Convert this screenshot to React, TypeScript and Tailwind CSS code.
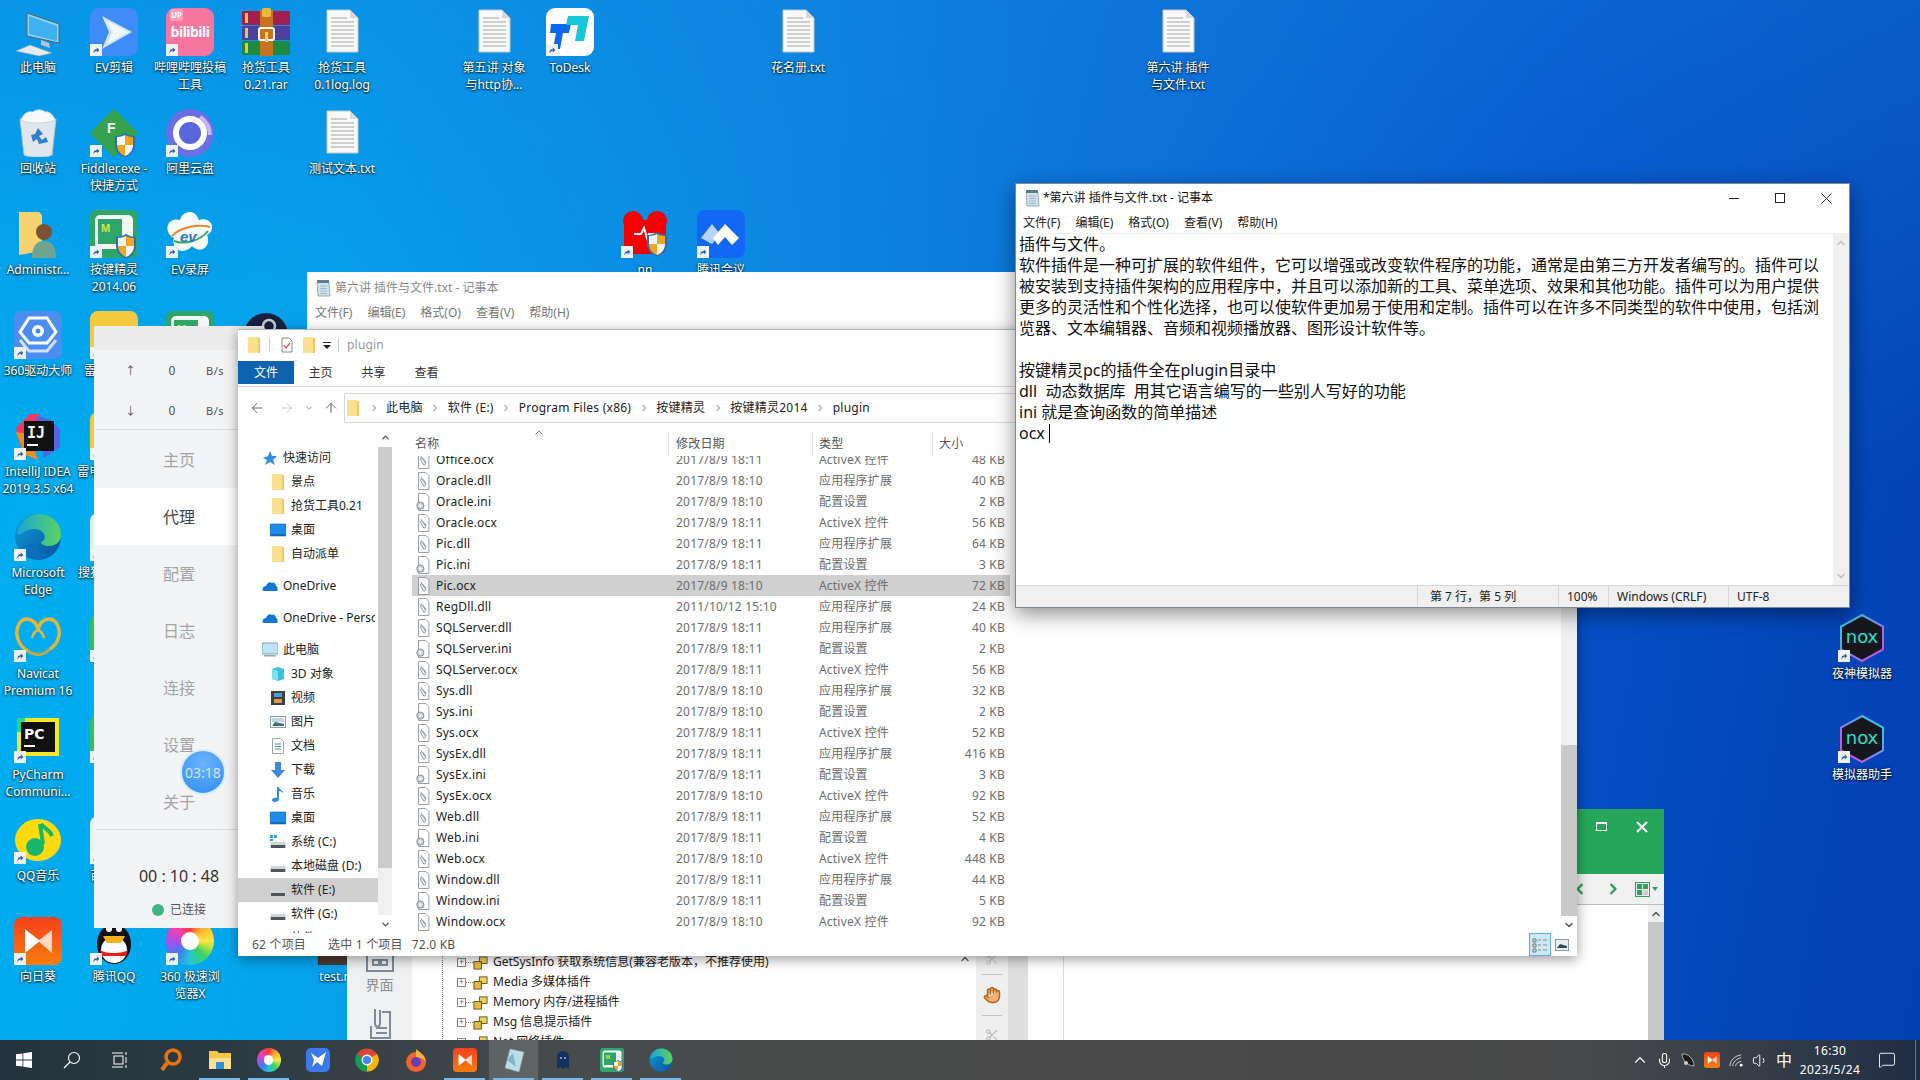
import React from 'react';
import { ChevronUp, ChevronDown, ArrowLeft, ArrowRight, ArrowUp, Hand, Scissors, Mic, Volume1, MessageSquare } from 'lucide-react';

// ---------- desktop icons ----------
const Svg = ({ children }: { children: React.ReactNode }) => (
  <svg viewBox="0 0 48 48" className="w-full h-full">{children}</svg>
);

const Shield = ({ x, y }: { x: number; y: number }) => (
  <g transform={`translate(${x} ${y})`}>
    <path d="M10 0C7 2 4 3 0 3v9c0 6 4 10 10 13 6-3 10-7 10-13V3c-4 0-7-1-10-3z" fill="#2a6fb5" />
    <path d="M10 2v10H2V4c3 0 6-1 8-2z" fill="#f5f5f5" />
    <path d="M10 2c2 1 5 2 8 2v8h-8z" fill="#f0a51e" />
    <path d="M2 12h8v11c-5-2-8-6-8-11z" fill="#f0a51e" />
    <path d="M10 12h8c0 5-3 9-8 11z" fill="#f5f5f5" />
  </g>
);

const MonitorIcon = () => (
  <Svg>
    <path d="M13 5l32 11v19L13 28z" fill="#8ed2f5" stroke="#56636e" strokeWidth="1" />
    <path d="M15 8l28 10v15L15 26z" fill="#3fb1ee" />
    <path d="M27 32l8 3 1 5-9-3z" fill="#b9c4cc" />
    <path d="M2 43l14-6 22 8-13 3z" fill="#e6ebee" stroke="#98a3ab" strokeWidth="0.6" />
  </Svg>
);

const EvCut = () => (
  <Svg>
    <rect x="0" y="0" width="48" height="48" rx="9" fill="#3f8cf8" />
    <path d="M12 8l30 16-30 17 7-17z" fill="#cfe4ff" />
    <path d="M17 13l21 11-21 12 6-12z" fill="#fff" opacity="0.75" />
  </Svg>
);

const Bili = () => (
  <div className="relative w-full h-full rounded-[9px] bg-[#f7769f] overflow-hidden text-white">
    <div className="absolute left-[4px] top-[1px] text-[8px] leading-[12px] font-bold bg-[#ff9db9] px-[1px] rounded-[2px]">UP</div>
    <div className="absolute left-0 right-0 top-[15px] text-center text-[14px] leading-[18px] font-bold tracking-[-0.5px]">bilibili</div>
  </div>
);

const Rar = () => (
  <Svg>
    <rect x="0" y="3" width="48" height="14" rx="1" fill="#a41f4f" />
    <rect x="0" y="18" width="48" height="14" rx="1" fill="#4d3f9f" />
    <rect x="0" y="33" width="48" height="14" rx="1" fill="#1d8a3f" />
    <rect x="3" y="5" width="3" height="10" fill="#e9c83c" />
    <rect x="3" y="20" width="3" height="10" fill="#e9c83c" />
    <rect x="3" y="35" width="3" height="10" fill="#e9c83c" />
    <rect x="18" y="2" width="13" height="46" fill="#c9711d" />
    <rect x="20" y="0" width="9" height="9" rx="2" fill="#edb93c" />
    <rect x="17" y="20" width="15" height="12" rx="2" fill="none" stroke="#fff" strokeWidth="2" />
    <rect x="23" y="24" width="3" height="10" fill="#f3d36b" />
  </Svg>
);

const TxtFile = () => (
  <Svg>
    <path d="M9 2h23l8 8v34H9z" fill="#f9f9f9" stroke="#c7c7c7" strokeWidth="1" />
    <path d="M32 2v8h8z" fill="#d8d8d8" />
    {[10, 14, 18, 22, 26, 30, 34, 38].map((y) => (
      <line key={y} x1="13" x2={y === 10 ? 29 : 36} y1={y} y2={y} stroke="#a5a5a5" strokeWidth="1" />
    ))}
  </Svg>
);

const ToDeskIcon = () => (
  <Svg>
    <rect x="0" y="0" width="48" height="48" rx="9" fill="#fff" />
    <path d="M5 16h20l-2 9h-6l-3 16H7l3-16H4z" fill="#0b6bf0" />
    <path d="M22 8h21l-5 25h-9l3-16h-12z" fill="#19c7d8" />
  </Svg>
);

const Recycle = () => (
  <Svg>
    <path d="M6 10l4 36c6 3 22 3 28 0l4-36z" fill="#dfe7ec" stroke="#b6c2ca" strokeWidth="1" />
    <path d="M7 11c3-8 8-9 12-8 3-3 9-3 12 0 5-1 8 3 10 8-9 4-26 4-34 0z" fill="#f7f9fa" stroke="#c9d1d6" strokeWidth="0.8" />
    <path d="M24 19l5 6-4 2 3 4 4-3 2 5-9 2-2-5-4 3-2-7 4-1z" fill="#2e7fd0" />
  </Svg>
);

const Fiddler = () => (
  <Svg>
    <path d="M24 0l24 24-24 24L0 24z" fill="#36a24b" />
    <text x="17" y="24" fontSize="14" fontWeight="700" fill="#fff" fontFamily="Liberation Sans">F</text>
    <Shield x={25} y={24} />
  </Svg>
);

const AliDrive = () => (
  <Svg>
    <circle cx="24" cy="24" r="24" fill="#6a6fe6" />
    <circle cx="24" cy="24" r="14" fill="#5a66dc" stroke="#fff" strokeWidth="6" />
    <path d="M34 8a22 22 0 0110 18" fill="none" stroke="#c7b8f5" strokeWidth="4" />
  </Svg>
);

const Admin = () => (
  <Svg>
    <path d="M5 2h20l3 3v36l-23 4z" fill="#f6d36f" />
    <circle cx="30" cy="22" r="8" fill="#7a5334" />
    <path d="M18 48c0-14 6-17 12-17s12 3 12 17z" fill="#6fa58e" />
  </Svg>
);

const KeyWizard = () => (
  <Svg>
    <rect x="0" y="0" width="48" height="48" rx="6" fill="#2ea66a" />
    <rect x="5" y="5" width="38" height="34" rx="5" fill="#f3f7f3" />
    <rect x="8" y="9" width="24" height="25" fill="#2ea66a" />
    <text x="11" y="22" fontSize="11" fontWeight="700" fill="#d8e24c" fontFamily="Liberation Sans">M</text>
    <Shield x={26} y={24} />
  </Svg>
);

const EvRec = () => (
  <Svg>
    <path d="M24 2c6 0 8 6 9 8 5-2 12 0 13 6 1 5-3 8-5 9 2 4 2 11-4 14-5 2-9-1-11-3-3 4-10 7-15 3-4-3-4-8-3-11-5-2-8-8-6-13 2-6 9-6 12-5 1-4 4-8 10-8z" fill="#f6fbff" />
    <path d="M6 26c8-9 26-12 38-9" fill="none" stroke="#e78a2b" strokeWidth="2" />
    <path d="M8 31c10 4 26 0 34-10" fill="none" stroke="#35a853" strokeWidth="2" />
    <text x="14" y="32" fontSize="15" fontStyle="italic" fontWeight="700" fill="#2a74c8" fontFamily="Liberation Sans">ev</text>
  </Svg>
);

const Driver360 = () => (
  <Svg>
    <rect x="0" y="0" width="48" height="48" rx="7" fill="#4c8df0" />
    <path d="M15 7h18l9 14-9 11H15L6 21z" fill="none" stroke="#fff" strokeWidth="3" />
    <path d="M6 29l9 11h18l9-11" fill="none" stroke="#cfe1fb" strokeWidth="3" />
    <circle cx="24" cy="20" r="6" fill="#fff" />
    <circle cx="24" cy="20" r="2.500" fill="#4c8df0" />
  </Svg>
);

const IdeaIcon = () => (
  <Svg>
    <path d="M2 16L16 2h10l-8 24L6 34z" fill="#f4385f" />
    <path d="M22 4l12 3 12 10v18L30 46z" fill="#5a63e0" />
    <path d="M2 20l8 22 14 6-10-26z" fill="#f28c20" />
    <rect x="10" y="9" width="30" height="30" fill="#111" />
    <text x="13" y="26" fontSize="15" fontWeight="700" fill="#fff" fontFamily="DejaVu Sans Mono">IJ</text>
    <rect x="13" y="32" width="11" height="2" fill="#fff" />
  </Svg>
);

const EdgeIcon = () => (
  <Svg>
    <defs>
      <linearGradient id="edgeA" x1="0" y1="0" x2="1" y2="1">
        <stop offset="0" stopColor="#0c9fd8" />
        <stop offset="1" stopColor="#0b4f9e" />
      </linearGradient>
      <linearGradient id="edgeB" x1="0" y1="0" x2="1" y2="0">
        <stop offset="0" stopColor="#1aa6d8" />
        <stop offset="1" stopColor="#5bd35f" />
      </linearGradient>
    </defs>
    <circle cx="24" cy="24" r="23" fill="url(#edgeA)" />
    <path d="M3 20C6 7 16 1 25 1c12 0 22 9 22 21 0 7-6 11-12 11-5 0-8-2-8-4 3-1 5-4 3-8-3-6-13-6-18-3-4 2-7 5-9 2z" fill="url(#edgeB)" />
    <path d="M20 27c-2 8 5 15 14 14-3 4-8 6-12 5-8-2-12-12-2-19z" fill="#0c6fbd" />
  </Svg>
);

const Navicat = () => (
  <Svg>
    <path d="M24 16C22 4 10 2 5 10c-5 9-1 22 9 27" fill="none" stroke="#e2b63c" strokeWidth="3.500" />
    <path d="M24 16C26 4 38 2 43 10c5 9 1 20-7 25" fill="none" stroke="#e2b63c" strokeWidth="3.500" />
    <path d="M14 37c7 5 15 5 22-2" fill="none" stroke="#c9a93e" strokeWidth="3" />
    <path d="M24 16c-3 1-5 4-6 8M24 16c3 1 5 4 6 8" fill="none" stroke="#e2b63c" strokeWidth="2.500" />
  </Svg>
);

const PyCharmIcon = () => (
  <Svg>
    <rect x="3" y="3" width="42" height="38" fill="#f6e72b" />
    <rect x="3" y="3" width="8" height="14" fill="#21d789" />
    <rect x="7" y="7" width="34" height="30" fill="#111" />
    <text x="10" y="24" fontSize="14" fontWeight="700" fill="#fff" fontFamily="DejaVu Sans">PC</text>
    <rect x="10" y="30" width="11" height="2" fill="#fff" />
  </Svg>
);

const QQMusic = () => (
  <Svg>
    <ellipse cx="24" cy="24" rx="23" ry="21" fill="#ffdb0d" />
    <path d="M26 8l3 20" stroke="#18b56c" strokeWidth="4" />
    <circle cx="21" cy="31" r="9" fill="#18b56c" />
    <path d="M27 8c4 5 9 6 11 12" fill="none" stroke="#18b56c" strokeWidth="4" />
  </Svg>
);

const Sunflower = () => (
  <Svg>
    <defs>
      <linearGradient id="sun" x1="0" y1="0" x2="0" y2="1">
        <stop offset="0" stopColor="#f2401e" />
        <stop offset="1" stopColor="#fa7d0c" />
      </linearGradient>
    </defs>
    <rect x="0" y="0" width="48" height="48" rx="8" fill="url(#sun)" />
    <path d="M11 12l15 12-15 12z" fill="#fff" />
    <path d="M38 13L24 24l14 12z" fill="#ffd9c5" />
  </Svg>
);

const Penguin = () => (
  <Svg>
    <ellipse cx="24" cy="27" rx="17" ry="20" fill="#111" />
    <ellipse cx="24" cy="33" rx="13" ry="13" fill="#fff" />
    <path d="M13 19h22l-4 7H17z" fill="#f6b11a" />
    <path d="M10 33c5 4 23 4 28 0l-2 6H12z" fill="#e3201b" />
    <circle cx="19" cy="12" r="3" fill="#fff" />
    <circle cx="29" cy="12" r="3" fill="#fff" />
  </Svg>
);

const Swirl = () => (
  <div className="w-full h-full rounded-full bg-[conic-gradient(#ff3d3d,#ffb02e,#ffe83a,#3fd35c,#27c7d6,#3f7bf0,#b04ce8,#ff3da0,#ff3d3d)] flex items-center justify-center">
    <div className="w-[38%] h-[38%] rounded-full bg-white" />
  </div>
);

const Tile = ({ color }: { color: string }) => <div className={`w-full h-full rounded-[8px] ${color}`} />;

const RedBear = () => (
  <Svg>
    <circle cx="12" cy="11" r="10" fill="#f40000" />
    <circle cx="36" cy="11" r="10" fill="#f40000" />
    <rect x="3" y="10" width="42" height="34" rx="6" fill="#f40000" />
    <path d="M13 24h7l3-6 3 10 2-4h6" fill="none" stroke="#fff" strokeWidth="2" />
    <Shield x={26} y={22} />
  </Svg>
);

const Meeting = () => (
  <Svg>
    <rect x="0" y="0" width="48" height="48" rx="8" fill="#1367f5" />
    <path d="M4 28l11-14 8 10-8 10z" fill="#b9d4ff" />
    <path d="M16 28l12-14 14 14-7 7-7-8-7 8z" fill="#fff" />
  </Svg>
);

const Nox = ({ flip }: { flip?: boolean }) => (
  <Svg>
    <defs>
      <linearGradient id="noxA" x1="0" y1="0" x2="1" y2="1">
        <stop offset="0" stopColor="#19d8e6" />
        <stop offset="1" stopColor="#e03ee0" />
      </linearGradient>
      <linearGradient id="noxB" x1="1" y1="0" x2="0" y2="1">
        <stop offset="0" stopColor="#19d8e6" />
        <stop offset="1" stopColor="#e03ee0" />
      </linearGradient>
    </defs>
    <path d="M24 1l21 11.500v23L24 47 3 35.500v-23z" fill="#15171d" stroke={flip ? 'url(#noxB)' : 'url(#noxA)'} strokeWidth="2" />
    <text x="24" y="29" textAnchor="middle" fontSize="18" fill="#27e0d2" fontFamily="DejaVu Sans">nox</text>
  </Svg>
);

const Steam = () => (
  <Svg>
    <circle cx="24" cy="24" r="22" fill="#16213f" />
    <circle cx="27" cy="15" r="6" fill="none" stroke="#c7ccd6" strokeWidth="2.500" />
  </Svg>
);

const Shortcut = () => (
  <div className="absolute left-0 bottom-0 w-[12px] h-[12px] bg-[#eef2f6] flex items-center justify-center">
    <svg viewBox="0 0 12 12" className="w-[10px] h-[10px]">
      <path d="M3 10c0-4 1-5 4-5V3l3 3-3 3V7c-2 0-3 1-4 3z" fill="#2b5f9e" />
    </svg>
  </div>
);

type DeskItem = { x: number; row: number; label: string; icon: React.ReactNode; link?: boolean };

const desk: DeskItem[] = [
  { x: 38, row: 0, label: '此电脑', icon: <MonitorIcon /> },
  { x: 38, row: 1, label: '回收站', icon: <Recycle /> },
  { x: 38, row: 2, label: 'Administr...', icon: <Admin /> },
  { x: 38, row: 3, label: '360驱动大师', icon: <Driver360 />, link: true },
  { x: 38, row: 4, label: 'IntelliJ IDEA\n2019.3.5 x64', icon: <IdeaIcon />, link: true },
  { x: 38, row: 5, label: 'Microsoft\nEdge', icon: <EdgeIcon />, link: true },
  { x: 38, row: 6, label: 'Navicat\nPremium 16', icon: <Navicat />, link: true },
  { x: 38, row: 7, label: 'PyCharm\nCommuni...', icon: <PyCharmIcon />, link: true },
  { x: 38, row: 8, label: 'QQ音乐', icon: <QQMusic />, link: true },
  { x: 38, row: 9, label: '向日葵', icon: <Sunflower />, link: true },
  { x: 114, row: 0, label: 'EV剪辑', icon: <EvCut />, link: true },
  { x: 114, row: 1, label: 'Fiddler.exe -\n快捷方式', icon: <Fiddler />, link: true },
  { x: 114, row: 2, label: '按键精灵\n2014.06', icon: <KeyWizard />, link: true },
  { x: 114, row: 3, label: '雷电模拟器', icon: <Tile color="bg-[#f5c93e]" />, link: true },
  { x: 114, row: 4, label: '雷电多开器64', icon: <Tile color="bg-[#f5c93e]" />, link: true },
  { x: 114, row: 5, label: '搜狗拼音输入', icon: <Tile color="bg-[#dfeef8]" />, link: true },
  { x: 114, row: 6, label: '', icon: <Tile color="bg-[#2fc15a]" />, link: true },
  { x: 114, row: 7, label: '', icon: <Tile color="bg-[#2fc15a]" />, link: true },
  { x: 114, row: 8, label: '百度网盘', icon: <Tile color="bg-[#e9eef2]" />, link: true },
  { x: 114, row: 9, label: '腾讯QQ', icon: <Penguin />, link: true },
  { x: 190, row: 0, label: '哔哩哔哩投稿\n工具', icon: <Bili />, link: true },
  { x: 190, row: 1, label: '阿里云盘', icon: <AliDrive />, link: true },
  { x: 190, row: 2, label: 'EV录屏', icon: <EvRec />, link: true },
  { x: 190, row: 3, label: '', icon: <KeyWizard />, link: true },
  { x: 190, row: 9, label: '360 极速浏\n览器X', icon: <Swirl />, link: true },
  { x: 266, row: 0, label: '抢货工具\n0.21.rar', icon: <Rar /> },
  { x: 266, row: 3, label: '', icon: <Steam /> },
  { x: 342, row: 0, label: '抢货工具\n0.1log.log', icon: <TxtFile /> },
  { x: 342, row: 1, label: '测试文本.txt', icon: <TxtFile /> },
  { x: 342, row: 9, label: 'test.nnx', icon: <div className="w-full h-full bg-[#4a3a30]" /> },
  { x: 494, row: 0, label: '第五讲 对象\n与http协...', icon: <TxtFile /> },
  { x: 570, row: 0, label: 'ToDesk', icon: <ToDeskIcon />, link: true },
  { x: 645, row: 2, label: 'nn', icon: <RedBear />, link: true },
  { x: 721, row: 2, label: '腾讯会议', icon: <Meeting />, link: true },
  { x: 798, row: 0, label: '花名册.txt', icon: <TxtFile /> },
  { x: 1178, row: 0, label: '第六讲 插件\n与文件.txt', icon: <TxtFile /> },
  { x: 1862, row: 6, label: '夜神模拟器', icon: <Nox />, link: true },
  { x: 1862, row: 7, label: '模拟器助手', icon: <Nox flip />, link: true },
];

const DesktopIcon = ({ item }: { item: DeskItem }) => (
  <div className="absolute w-[76px] flex flex-col items-center" style={{ left: item.x - 38, top: 8 + item.row * 101 }}>
    <div className="relative w-[48px] h-[48px]">
      {item.icon}
      {item.link && <Shortcut />}
    </div>
    <div className="pt-[3px] text-[12px] leading-[17px] text-white text-center whitespace-pre [text-shadow:0_1px_2px_rgba(0,0,0,0.9),0_0_3px_rgba(0,0,0,0.55)]">
      {item.label}
    </div>
  </div>
);

// ---------- small explorer icons ----------
const FolderSmall = () => (
  <svg viewBox="0 0 16 16" className="w-[16px] h-[16px]">
    <path d="M2 0h10l2 2v14H2z" fill="#fbe08f" />
    <path d="M12 1h2v15h-2z" fill="#f0c75e" />
  </svg>
);

const Desk = () => (
  <svg viewBox="0 0 16 16" className="w-[16px] h-[16px]">
    <rect x="0" y="2" width="16" height="12" fill="#1f8be8" stroke="#1767b2" strokeWidth="0.6" />
    <rect x="1" y="12.500" width="14" height="1" fill="#0e4f92" />
  </svg>
);

const Cloud = () => (
  <svg viewBox="0 0 16 16" className="w-[16px] h-[16px]">
    <path d="M1 13c-1-2 0-5 3-5 1-3 4-5 6-3 2-1 4 1 4 3 2 0 2 5 1 5z" fill="#1279d6" />
  </svg>
);

const Star = () => (
  <svg viewBox="0 0 16 16" className="w-[16px] h-[16px]">
    <path d="M8 1l2 5h5l-4 4 2 5-5-3-5 3 2-5-4-2 5-2z" fill="#2f8ee0" />
  </svg>
);

const Pc = () => (
  <svg viewBox="0 0 16 16" className="w-[16px] h-[16px]">
    <rect x="0" y="1" width="16" height="11" fill="#bfe3f8" stroke="#6f8ea6" strokeWidth="0.8" />
    <rect x="2" y="13" width="12" height="1.500" fill="#9aa8b2" />
  </svg>
);

const Cube = () => (
  <svg viewBox="0 0 16 16" className="w-[16px] h-[16px]">
    <path d="M2 3l6-2 6 2v10l-6 2-6-2z" fill="#3cc0dc" />
    <path d="M2 3l6 2v10l-6-2z" fill="#7fe0ee" />
  </svg>
);

const Film = () => (
  <svg viewBox="0 0 16 16" className="w-[16px] h-[16px]">
    <rect x="1" y="1" width="14" height="14" fill="#40413f" />
    <rect x="4" y="3" width="8" height="4" fill="#4d9be0" />
    <rect x="4" y="9" width="8" height="4" fill="#d39b4a" />
  </svg>
);

const Pic = () => (
  <svg viewBox="0 0 16 16" className="w-[16px] h-[16px]">
    <rect x="0.500" y="2.500" width="15" height="11" fill="#fff" stroke="#8aa0b2" />
    <rect x="2" y="4" width="12" height="4" fill="#bcd8ee" />
    <path d="M2 12l3-4 9 2v2z" fill="#3f6f6a" />
  </svg>
);

const DocSmall = () => (
  <svg viewBox="0 0 16 16" className="w-[16px] h-[16px]">
    <path d="M2.500.500h8l3 3v12h-11z" fill="#fff" stroke="#9aa5ad" />
    <path d="M5 6h6M5 8.500h6M5 11h6" stroke="#3f8bd0" strokeWidth="1" />
  </svg>
);

const Down = () => (
  <svg viewBox="0 0 16 16" className="w-[16px] h-[16px]">
    <path d="M5 0h6v8h4l-7 8-7-8h4z" fill="#3c8adf" />
  </svg>
);

const Note = () => (
  <svg viewBox="0 0 16 16" className="w-[16px] h-[16px]">
    <path d="M7 1h2c0 3 4 3 4 6-1-1-2-2-4-2v8c0 2-2 3-4 3s-3-1-3-2 2-3 5-2z" fill="#2a8de4" />
  </svg>
);

const Drive = ({ win }: { win?: boolean }) => (
  <svg viewBox="0 0 16 16" className="w-[16px] h-[16px]">
    {win && <path d="M0 1h3v3H0zM4 1h3v3H4zM0 5h3v2H0z" fill="#2aa3e8" />}
    <path d="M1 8h14l1 3v3H0v-3z" fill="#d2d5d7" />
    <rect x="1" y="11" width="14" height="3" fill="#50555a" />
  </svg>
);

const FileIcon = ({ ini }: { ini?: boolean }) => (
  <svg viewBox="0 0 16 20" className="w-[15px] h-[18px]">
    <path d="M2.500.500h8l3.500 3.500v15.500H2.500z" fill="#fff" stroke="#8b9298" />
    {ini ? (
      <g>
        <circle cx="4.500" cy="14" r="4" fill="#cfd3d6" stroke="#7d8489" />
        <circle cx="4.500" cy="14" r="1.300" fill="#fff" />
      </g>
    ) : (
      <path d="M5 6l5 7c1 2-1 3-2 2L5 10c-1-2 1-3 2-2l4 5" fill="none" stroke="#a0a6aa" strokeWidth="1.200" />
    )}
  </svg>
);

const navItems: { text: string; icon: React.ReactNode; lvl: 1 | 2; gap?: boolean; sel?: boolean }[] = [
  { text: '快速访问', icon: <Star />, lvl: 1 },
  { text: '景点', icon: <FolderSmall />, lvl: 2 },
  { text: '抢货工具0.21', icon: <FolderSmall />, lvl: 2 },
  { text: '桌面', icon: <Desk />, lvl: 2 },
  { text: '自动派单', icon: <FolderSmall />, lvl: 2 },
  { text: 'OneDrive', icon: <Cloud />, lvl: 1, gap: true },
  { text: 'OneDrive - Personal', icon: <Cloud />, lvl: 1, gap: true },
  { text: '此电脑', icon: <Pc />, lvl: 1, gap: true },
  { text: '3D 对象', icon: <Cube />, lvl: 2 },
  { text: '视频', icon: <Film />, lvl: 2 },
  { text: '图片', icon: <Pic />, lvl: 2 },
  { text: '文档', icon: <DocSmall />, lvl: 2 },
  { text: '下载', icon: <Down />, lvl: 2 },
  { text: '音乐', icon: <Note />, lvl: 2 },
  { text: '桌面', icon: <Desk />, lvl: 2 },
  { text: '系统 (C:)', icon: <Drive win />, lvl: 2 },
  { text: '本地磁盘 (D:)', icon: <Drive />, lvl: 2 },
  { text: '软件 (E:)', icon: <Drive />, lvl: 2, sel: true },
  { text: '软件 (G:)', icon: <Drive />, lvl: 2 },
  { text: '软件 (H:)', icon: <Drive />, lvl: 2 },
];

const AX = 'ActiveX 控件';
const DL = '应用程序扩展';
const IN = '配置设置';
const D0 = '2017/8/9 18:10';
const D1 = '2017/8/9 18:11';

const files: [string, string, string, string][] = [
  ['Office.ocx', D1, AX, '48 KB'],
  ['Oracle.dll', D0, DL, '40 KB'],
  ['Oracle.ini', D0, IN, '2 KB'],
  ['Oracle.ocx', D1, AX, '56 KB'],
  ['Pic.dll', D1, DL, '64 KB'],
  ['Pic.ini', D1, IN, '3 KB'],
  ['Pic.ocx', D0, AX, '72 KB'],
  ['RegDll.dll', '2011/10/12 15:10', DL, '24 KB'],
  ['SQLServer.dll', D1, DL, '40 KB'],
  ['SQLServer.ini', D1, IN, '2 KB'],
  ['SQLServer.ocx', D1, AX, '56 KB'],
  ['Sys.dll', D0, DL, '32 KB'],
  ['Sys.ini', D0, IN, '2 KB'],
  ['Sys.ocx', D1, AX, '52 KB'],
  ['SysEx.dll', D1, DL, '416 KB'],
  ['SysEx.ini', D1, IN, '3 KB'],
  ['SysEx.ocx', D0, AX, '92 KB'],
  ['Web.dll', D1, DL, '52 KB'],
  ['Web.ini', D1, IN, '4 KB'],
  ['Web.ocx', D0, AX, '448 KB'],
  ['Window.dll', D1, DL, '44 KB'],
  ['Window.ini', D1, IN, '5 KB'],
  ['Window.ocx', D0, AX, '92 KB'],
];

const crumbs = ['此电脑', '软件 (E:)', 'Program Files (x86)', '按键精灵', '按键精灵2014', 'plugin'];

const Crumb = () => (
  <div className="w-[25px] flex justify-center">
    <svg viewBox="0 0 8 8" className="w-[8px] h-[8px]">
      <path d="M2.500 1l3 3-3 3" fill="none" stroke="#777" strokeWidth="1" />
    </svg>
  </div>
);

const NotepadIcon = () => (
  <svg viewBox="0 0 16 18" className="w-[16px] h-[18px]">
    <path d="M2 3h12l1 14H3z" fill="#cfe3ec" stroke="#7f8f9a" strokeWidth="0.7" />
    <path d="M2 1h12v3H2z" fill="#5f7c8c" />
    <path d="M5 7h7M5 9.500h7M5 12h7M5 14.500h7" stroke="#8fb0c0" strokeWidth="0.8" />
  </svg>
);

// ---------- windows ----------
const Explorer = () => (
  <div className="absolute left-[238px] top-[329px] w-[1339px] h-[627px] bg-white flex flex-col shadow-[0_3px_12px_rgba(0,0,0,0.4)] border-t border-[#b8b8b8] text-[12px]">
    <div className="h-[31px] flex items-center pb-[2px] pl-[8px] text-[#999]">
      <FolderSmall />
      <div className="w-px h-[14px] bg-[#ccc] ml-[7px] mr-[9px]" />
      <svg viewBox="0 0 16 16" className="w-[16px] h-[16px]">
        <path d="M3 1h7l3 3v11H3z" fill="#fff" stroke="#888" />
        <path d="M5 8l2 3 4-5" fill="none" stroke="#d9502e" strokeWidth="1.300" />
      </svg>
      <div className="ml-[6px]">
        <FolderSmall />
      </div>
      <svg viewBox="0 0 10 10" className="w-[10px] h-[10px] ml-[5px]">
        <path d="M1 2h8v1H1zM1 5h8L5 9z" fill="#222" />
      </svg>
      <div className="w-px h-[14px] bg-[#ccc] ml-[6px] mr-[8px]" />
      <span className="tracking-[0.2px]">plugin</span>
    </div>
    <div className="h-[26px] border-b border-[#d9d9d9] flex text-[#333]">
      <div className="w-[56px] h-[23px] bg-[#0f62ad] text-white flex items-center justify-center">文件</div>
      <div className="w-[53px] h-[23px] flex items-center justify-center">主页</div>
      <div className="w-[53px] h-[23px] flex items-center justify-center">共享</div>
      <div className="w-[53px] h-[23px] flex items-center justify-center">查看</div>
    </div>
    <div className="h-[41px] flex items-start pt-[6px]">
      <div className="w-[106px] h-[30px] flex items-center text-[#555] pl-[11px]">
        <ArrowLeft size={16} strokeWidth={1.5} className="text-[#666]" />
        <ArrowRight size={16} strokeWidth={1.5} className="text-[#ccc] ml-[14px]" />
        <ChevronDown size={10} className="text-[#888] ml-[9px]" />
        <ArrowUp size={16} strokeWidth={1.5} className="text-[#666] ml-[9px]" />
      </div>
      <div className="flex-1 h-[30px] border border-[#d9d9d9] flex items-center text-[#222] tracking-[0.25px]">
        <FolderSmall />
        <Crumb />
        {crumbs.map((c, i) => (
          <React.Fragment key={c}>
            <span>{c}</span>
            {i < crumbs.length - 1 && <Crumb />}
          </React.Fragment>
        ))}
      </div>
    </div>
    <div className="flex-1 min-h-0 flex">
      <div className="w-[140px] shrink-0 overflow-hidden pt-[18px] text-[#222]">
        {navItems.map((n) => (
          <div
            key={n.text + n.lvl + (n.sel ? 's' : '')}
            className={`h-[24px] flex items-center whitespace-nowrap ${n.lvl === 1 ? 'pl-[24px]' : 'pl-[32px]'} ${n.gap ? 'mt-[8px]' : ''} ${n.sel ? 'bg-[#cfcfcf]' : ''}`}
          >
            <div className="w-[16px] h-[16px] shrink-0">{n.icon}</div>
            <span className="ml-[5px] w-[92px] overflow-hidden">{n.text}</span>
          </div>
        ))}
      </div>
      <div className="w-[14px] shrink-0 flex flex-col bg-[#f0f0f0]">
        <div className="h-[19px] bg-white flex items-center justify-center">
          <ChevronUp size={11} strokeWidth={3} className="text-[#555]" />
        </div>
        <div className="h-[421px] bg-[#cdcdcd]" />
        <div className="flex-1" />
        <div className="h-[18px] bg-white flex items-center justify-center">
          <ChevronDown size={11} strokeWidth={3} className="text-[#555]" />
        </div>
      </div>
      <div className="flex-1 min-w-0 pl-[20px] flex flex-col overflow-hidden tracking-[0.2px]">
        <div className="relative h-[28px] shrink-0 grid grid-cols-[257px_144px_120px_77px] items-center pt-[4px] text-[#555]">
          <div className="pl-[3px] border-r border-[#e5e5e5] h-[24px] flex items-center">名称</div>
          <div className="pl-[7px] border-r border-[#e5e5e5] h-[24px] flex items-center">修改日期</div>
          <div className="pl-[6px] border-r border-[#e5e5e5] h-[24px] flex items-center">类型</div>
          <div className="pl-[6px] h-[24px] flex items-center">大小</div>
          <svg viewBox="0 0 8 5" className="absolute left-[123px] top-[2px] w-[8px] h-[5px]">
            <path d="M.5 4.500l3.500-3.500 3.500 3.500" fill="none" stroke="#888" />
          </svg>
        </div>
        <div className="flex-1 min-h-0 overflow-hidden">
          <div className="mt-[-7px]">
            {files.map(([name, date, type, size]) => (
              <div key={name} className={`w-[598px] h-[21px] grid grid-cols-[257px_144px_120px_77px] items-center ${name === 'Pic.ocx' ? 'bg-[#d0d0d0]' : ''}`}>
                <div className="flex items-center pl-[4px] text-[#222]">
                  <FileIcon ini={name.endsWith('.ini')} />
                  <span className="ml-[5px]">{name}</span>
                </div>
                <div className="pl-[7px] text-[#6d6d6d]">{date}</div>
                <div className="pl-[6px] text-[#6d6d6d]">{type}</div>
                <div className="pr-[5px] text-right text-[#6d6d6d]">{size}</div>
              </div>
            ))}
          </div>
        </div>
      </div>
      <div className="w-[16px] shrink-0 flex flex-col bg-[#f0f0f0]">
        <div className="h-[317px]" />
        <div className="h-[171px] bg-[#c9c9c9]" />
        <div className="flex-1 bg-white flex items-center justify-center">
          <ChevronDown size={12} strokeWidth={3} className="text-[#555]" />
        </div>
      </div>
    </div>
    <div className="h-[23px] shrink-0 flex items-center pl-[14px] text-[#555] tracking-[0.2px]">
      <span>62 个项目</span>
      <span className="ml-[22px]">选中 1 个项目</span>
      <span className="ml-[9px]">72.0 KB</span>
      <div className="ml-auto h-full w-[22px] bg-[#cce8f7] border border-[#5fb0d8] flex items-center justify-center">
        <svg viewBox="0 0 16 16" className="w-[16px] h-[16px]">
          <path d="M1 2h3v3H1zM1 7h3v3H1zM1 12h3v3H1z" fill="none" stroke="#777" />
          <path d="M6 3h3M11 3h4M6 8h3M11 8h4M6 13h3M11 13h4" stroke="#888" />
        </svg>
      </div>
      <div className="w-[14px] ml-[4px] mr-[8px]">
        <svg viewBox="0 0 14 12" className="w-[14px] h-[12px]">
          <rect x="0.500" y="0.500" width="13" height="11" fill="#e8eef2" stroke="#8a98a4" />
          <path d="M2 9l3-4 7 2v2z" fill="#2d4d62" />
        </svg>
      </div>
    </div>
  </div>
);

const noteLines = [
  '插件与文件。',
  '软件插件是一种可扩展的软件组件，它可以增强或改变软件程序的功能，通常是由第三方开发者编写的。插件可以',
  '被安装到支持插件架构的应用程序中，并且可以添加新的工具、菜单选项、效果和其他功能。插件可以为用户提供',
  '更多的灵活性和个性化选择，也可以使软件更加易于使用和定制。插件可以在许多不同类型的软件中使用，包括浏',
  '览器、文本编辑器、音频和视频播放器、图形设计软件等。',
  '\u00a0',
  '按键精灵pc的插件全在plugin目录中',
  'dll  动态数据库  用其它语言编写的一些别人写好的功能',
  'ini 就是查询函数的简单描述',
];

const menuNames = ['文件(F)', '编辑(E)', '格式(O)', '查看(V)', '帮助(H)'];

const FrontNotepad = () => (
  <div className="absolute left-[1015px] top-[183px] w-[835px] h-[425px] bg-white flex flex-col border border-[#7d8893] shadow-[0_6px_20px_rgba(0,0,0,0.45)]">
    <div className="h-[28px] shrink-0 flex items-center pl-[8px] text-[12px] text-[#111]">
      <NotepadIcon />
      <span className="ml-[3px]">*第六讲 插件与文件.txt - 记事本</span>
      <div className="ml-auto flex h-full">
        <div className="w-[46px] flex items-center justify-center">
          <div className="w-[10px] h-px bg-[#222]" />
        </div>
        <div className="w-[46px] flex items-center justify-center">
          <div className="w-[10px] h-[10px] border border-[#222]" />
        </div>
        <div className="w-[46px] flex items-center justify-center">
          <svg viewBox="0 0 12 12" className="w-[11px] h-[11px]">
            <path d="M.5.5l11 11M11.500.5l-11 11" stroke="#222" />
          </svg>
        </div>
      </div>
    </div>
    <div className="h-[21px] shrink-0 flex items-center gap-[15px] pl-[7px] text-[12px] text-[#222]">
      {menuNames.map((m) => (
        <span key={m}>{m}</span>
      ))}
    </div>
    <div className="flex-1 min-h-0 flex border-t border-[#f0f0f0]">
      <div className="flex-1 min-w-0 pl-[3px] text-[16px] leading-[21px] text-[#111] whitespace-pre">
        {noteLines.map((l, i) => (
          <div key={i}>{l}</div>
        ))}
        <div className="flex items-center">
          ocx
          <div className="ml-[4px] w-px h-[19px] bg-black" />
        </div>
      </div>
      <div className="w-[16px] shrink-0 bg-[#f0f0f0] flex flex-col justify-between py-[3px] items-center">
        <ChevronUp size={12} strokeWidth={2.5} className="text-[#bbb]" />
        <ChevronDown size={12} strokeWidth={2.5} className="text-[#bbb]" />
      </div>
    </div>
    <div className="h-[22px] shrink-0 bg-[#f0f0f0] border-t border-[#d7d7d7] flex items-center text-[12px] text-[#222]">
      <div className="w-[402px] h-full border-r border-[#d7d7d7]" />
      <div className="w-[141px] h-full border-r border-[#d7d7d7] flex items-center pl-[12px]">第 7 行，第 5 列</div>
      <div className="w-[50px] h-full border-r border-[#d7d7d7] flex items-center pl-[8px]">100%</div>
      <div className="w-[120px] h-full border-r border-[#d7d7d7] flex items-center pl-[8px]">Windows (CRLF)</div>
      <div className="pl-[8px]">UTF-8</div>
    </div>
  </div>
);

const BackNotepad = () => (
  <div className="absolute left-[307px] top-[272px] w-[800px] h-[100px] bg-white text-[12px] text-[#8a8a8a]">
    <div className="h-[31px] flex items-center pl-[8px]">
      <NotepadIcon />
      <span className="ml-[4px]">第六讲 插件与文件.txt - 记事本</span>
    </div>
    <div className="h-[20px] flex items-center gap-[15px] pl-[8px] text-[#777]">
      {menuNames.map((m) => (
        <span key={m}>{m}</span>
      ))}
    </div>
  </div>
);

const treeRows = ['GetSysInfo 获取系统信息(兼容老版本，不推荐使用)', 'Media 多媒体插件', 'Memory 内存/进程插件', 'Msg 信息提示插件', 'Net 网络插件'];

const PluginIcon = () => (
  <svg viewBox="0 0 16 16" className="w-[15px] h-[15px]">
    <rect x="7" y="2" width="8" height="7" fill="#ecd25e" stroke="#5c5a2a" />
    <rect x="1" y="7" width="8" height="8" fill="#e8b93a" stroke="#5c5a2a" />
  </svg>
);

const KeyWizardWindow = () => (
  <div className="absolute left-[347px] top-[809px] w-[1317px] h-[240px] bg-white flex flex-col text-[12px]">
    <div className="h-[65px] shrink-0 bg-[#26a65b] flex items-start justify-end pt-[12px] pr-[16px] gap-[28px]">
      <div className="w-[11px] h-[9px] border border-white border-t-2 mt-[1px]" />
      <svg viewBox="0 0 12 12" className="w-[12px] h-[12px] ml-[1px]">
        <path d="M1 1l10 10M11 1L1 11" stroke="#fff" strokeWidth="2" />
      </svg>
    </div>
    <div className="h-[31px] shrink-0 bg-[#f0f0f0] border-b border-[#bdbdbd] flex items-center justify-end pr-[6px]">
      <svg viewBox="0 0 10 14" className="w-[8px] h-[12px] mr-[25px]">
        <path d="M8 1L2 7l6 6" fill="none" stroke="#2d9f5f" strokeWidth="3" />
      </svg>
      <svg viewBox="0 0 10 14" className="w-[8px] h-[12px] mr-[18px]">
        <path d="M2 1l6 6-6 6" fill="none" stroke="#2d9f5f" strokeWidth="3" />
      </svg>
      <div className="w-[15px] h-[15px] border border-[#26a65b] grid grid-cols-2 grid-rows-2 p-px gap-px">
        <div className="bg-[#26a65b]" />
        <div className="bg-[#26a65b]" />
        <div className="bg-[#26a65b]" />
        <div className="bg-[#ccc]" />
      </div>
      <svg viewBox="0 0 6 4" className="w-[6px] h-[4px] ml-[2px]">
        <path d="M0 0h6L3 4z" fill="#26a65b" />
      </svg>
    </div>
    <div className="flex-1 min-h-0 flex">
      <div className="w-[65px] shrink-0 bg-[#eef0f2] flex flex-col items-center text-[#8a8f94] text-[14px] pt-[48px]">
        <svg viewBox="0 0 30 20" className="w-[30px] h-[20px]">
          <path d="M2 0v18h26V0M8 7h6v5H8zM16 7h6v5h-6z" fill="none" stroke="#7d8b99" strokeWidth="2" />
        </svg>
        <div className="mt-[3px] leading-[18px]">界面</div>
        <svg viewBox="0 0 24 34" className="w-[24px] h-[34px] mt-[12px]">
          <path d="M7 3v14c0 5 5 5 5 0V4M14 6h8v26H3V20M8 22h11M8 27h11" fill="none" stroke="#7d8b99" strokeWidth="2" />
        </svg>
      </div>
      <div className="w-[545px] shrink-0 relative text-[#222] pt-[47px]">
        <div className="absolute left-[30px] top-0 bottom-0 border-l border-dotted border-[#888]" />
        {treeRows.map((t) => (
          <div key={t} className="h-[20px] flex items-center pl-[45px]">
            <div className="w-[9px] h-[9px] border border-[#888] flex items-center justify-center text-[8px] leading-[8px] text-[#555]">+</div>
            <div className="w-[7px] border-t border-dotted border-[#888]" />
            <PluginIcon />
            <span className="ml-[5px]">{t}</span>
          </div>
        ))}
      </div>
      <div className="w-[19px] shrink-0 pt-[48px] pl-[2px]">
        <ChevronUp size={12} strokeWidth={3} className="text-[#666]" />
      </div>
      <div className="w-[32px] shrink-0 bg-[#efefef] flex flex-col items-center pt-[47px]">
        <Scissors size={14} className="text-[#ccc] mb-[8px]" />
        <div className="w-[20px] h-px bg-[#c4c4c4]" />
        <Hand size={18} className="text-[#b5651d] fill-[#f0b070] my-[11px]" />
        <div className="w-[20px] h-px bg-[#c4c4c4]" />
        <Scissors size={14} className="text-[#bbb] mt-[12px]" />
      </div>
      <div className="w-[20px] shrink-0 bg-[#dedede]" />
      <div className="w-[36px] shrink-0 border-r border-[#ddd]" />
      <div className="flex-1" />
      <div className="w-[16px] shrink-0 flex flex-col bg-[#c8c8c8]">
        <div className="h-[17px] bg-[#f0f0f0] flex items-center justify-center">
          <ChevronUp size={12} strokeWidth={3} className="text-[#555]" />
        </div>
      </div>
    </div>
  </div>
);

const ProxyPanel = () => (
  <div className="absolute left-[94px] top-[326px] w-[170px] h-[602px] bg-[#f3f4f5] flex flex-col">
    <div className="h-[24px] shrink-0 bg-[#ececec]" />
    <div className="h-[80px] shrink-0 mx-[2px] pt-[1px] border-b border-[#dcdcdc] text-[#555] text-[11px]">
      <div className="h-[40px] grid grid-cols-[44px_64px_1fr] items-center">
        <div className="text-right pr-[4px]">↑</div>
        <div className="text-center text-[12px]">0</div>
        <div className="tracking-[0.5px] pl-[2px]">B/s</div>
      </div>
      <div className="h-[40px] grid grid-cols-[44px_64px_1fr] items-center">
        <div className="text-right pr-[4px]">↓</div>
        <div className="text-center text-[12px]">0</div>
        <div className="tracking-[0.5px] pl-[2px]">B/s</div>
      </div>
    </div>
    <div className="pt-[1px] text-[16px] text-[#a2a5a8]">
      {['主页', '代理', '配置', '日志', '连接', '设置', '关于'].map((m) => (
        <div key={m} className={`h-[57px] flex items-center justify-center ${m === '代理' ? 'bg-white text-[#444]' : ''}`}>
          {m}
        </div>
      ))}
    </div>
    <div className="mx-[2px] mt-[-1px] border-t border-[#dcdcdc] flex-1 flex flex-col items-center pt-[34px]">
      <div className="text-[16px] leading-[24px] text-[#333] whitespace-pre">00 : 10 : 48</div>
      <div className="mt-[13px] flex items-center text-[12px] text-[#555]">
        <div className="w-[12px] h-[12px] rounded-full bg-[#43b581]" />
        <span className="ml-[6px]">已连接</span>
      </div>
    </div>
  </div>
);

const TaskApp = ({ children, open, active }: { children: React.ReactNode; open?: boolean; active?: boolean }) => (
  <div className={`relative w-[49px] h-full flex items-center justify-center ${active ? 'bg-white/15' : ''}`}>
    <div className="w-[24px] h-[24px]">{children}</div>
    {open && <div className="absolute left-[4px] right-[4px] bottom-0 h-[2px] bg-[#76b9ed]" />}
  </div>
);

const Taskbar = () => (
  <div className="absolute left-0 bottom-0 w-full h-[40px] flex items-center bg-[linear-gradient(90deg,#24343e_0%,#2b3a42_12%,#484b4c_30%,#4a4a4a_60%,#474849_83%,#2f3a48_94%,#202c44_100%)] text-white">
    <div className="w-[48px] h-full flex items-center justify-center">
      <svg viewBox="0 0 16 16" className="w-[16px] h-[16px]">
        <path d="M0 2.300l6.500-.9v6.200H0zM7.300 1.300L16 0v7.600H7.300zM0 8.400h6.500v6.200L0 13.700zM7.300 8.400H16V16l-8.700-1.300z" fill="#fff" />
      </svg>
    </div>
    <div className="w-[48px] h-full flex items-center justify-center">
      <svg viewBox="0 0 18 18" className="w-[18px] h-[18px]">
        <circle cx="11" cy="7" r="5.500" fill="none" stroke="#fff" strokeWidth="1.100" />
        <path d="M7 11l-6 6" stroke="#fff" strokeWidth="1.300" />
      </svg>
    </div>
    <div className="w-[48px] h-full flex items-center justify-center">
      <svg viewBox="0 0 18 18" className="w-[18px] h-[18px]">
        <rect x="3" y="5" width="9" height="8" fill="none" stroke="#fff" />
        <path d="M1 2h11M1 16h11M15 1v3M15 6v6M15 14v3" stroke="#fff" />
      </svg>
    </div>
    <div className="w-[2px]" />
    <TaskApp>
      <svg viewBox="0 0 24 24" className="w-full h-full">
        <circle cx="14" cy="9" r="7" fill="none" stroke="#e8740c" strokeWidth="3.500" />
        <path d="M8 15l-5 7" stroke="#e8740c" strokeWidth="4" />
      </svg>
    </TaskApp>
    <TaskApp open>
      <svg viewBox="0 0 24 24" className="w-full h-full">
        <path d="M1 3h8l2 2h12v16H1z" fill="#f6c744" />
        <path d="M1 10h22v11H1z" fill="#fbe08f" />
        <rect x="8" y="14" width="8" height="7" fill="#2e8fdc" />
      </svg>
    </TaskApp>
    <TaskApp open>
      <Swirl />
    </TaskApp>
    <TaskApp>
      <svg viewBox="0 0 24 24" className="w-full h-full">
        <rect x="0" y="0" width="24" height="24" rx="5" fill="#3c78ee" />
        <path d="M5 5l7 5 8-6-4 14-5-4-5 5 2-7z" fill="#fff" />
      </svg>
    </TaskApp>
    <TaskApp>
      <svg viewBox="0 0 48 48" className="w-full h-full">
        <circle cx="24" cy="24" r="23" fill="#db4437" />
        <path d="M24 24L4 36A23 23 0 0024 47z" fill="#0f9d58" />
        <path d="M4 36A23 23 0 014 12L24 24z" fill="#0f9d58" />
        <path d="M24 24l20-12a23 23 0 01-20 35z" fill="#f4b400" />
        <circle cx="24" cy="24" r="11" fill="#fff" />
        <circle cx="24" cy="24" r="8" fill="#4285f4" />
      </svg>
    </TaskApp>
    <TaskApp>
      <svg viewBox="0 0 24 24" className="w-full h-full">
        <circle cx="12" cy="14" r="10" fill="#f2642c" />
        <path d="M12 1c3 3 9 5 10 13-3-5-8-5-10-2z" fill="#fbb03b" />
        <circle cx="12" cy="14" r="5" fill="#6d3bb8" />
      </svg>
    </TaskApp>
    <TaskApp open>
      <Sunflower />
    </TaskApp>
    <TaskApp open active>
      <svg viewBox="0 0 24 24" className="w-full h-full">
        <path d="M8 1l14 3-5 20L3 20z" fill="#bcdde8" stroke="#8fa7b2" strokeWidth="0.5" />
        <path d="M5 12l6-7 3 14z" fill="#7fb8cc" />
      </svg>
    </TaskApp>
    <TaskApp open>
      <svg viewBox="0 0 24 24" className="w-full h-full">
        <path d="M6 21V9c0-8 12-8 12 0v12l-3-2-3 2-3-2z" fill="#14315f" />
        <circle cx="10" cy="10" r="1" fill="#8fb8e8" />
        <circle cx="14" cy="10" r="1" fill="#8fb8e8" />
      </svg>
    </TaskApp>
    <TaskApp open>
      <KeyWizard />
    </TaskApp>
    <TaskApp open>
      <EdgeIcon />
    </TaskApp>
    <div className="ml-auto h-full flex items-center">
      <div className="w-[24px] flex justify-center">
        <ChevronUp size={18} strokeWidth={1.5} />
      </div>
      <div className="w-[24px] flex justify-center">
        <Mic size={17} strokeWidth={1.5} />
      </div>
      <div className="w-[24px] flex justify-center">
        <svg viewBox="0 0 16 16" className="w-[16px] h-[16px]">
          <path d="M2 2c6-1 12 5 12 12C8 14 2 8 2 2z" fill="#1a1a1a" stroke="#ccc" strokeWidth="0.8" />
          <circle cx="6" cy="11" r="2" fill="#ccc" />
        </svg>
      </div>
      <div className="w-[24px] h-[16px] flex justify-center">
        <div className="w-[16px] h-[16px]">
          <Sunflower />
        </div>
      </div>
      <div className="w-[24px] flex justify-center">
        <svg viewBox="0 0 16 16" className="w-[15px] h-[15px]">
          <path d="M1 14C1 8 6 3 13 2M4 14c0-4 4-8 9-9M7 14c0-2 3-5 6-5" fill="none" stroke="#ddd" strokeWidth="1" />
          <circle cx="13" cy="13" r="1.500" fill="#fff" />
        </svg>
      </div>
      <div className="w-[24px] flex justify-center">
        <Volume1 size={17} strokeWidth={1.3} />
      </div>
      <div className="w-[24px] text-center text-[16px]">中</div>
      <div className="w-[68px] text-center text-[12px] leading-[19px] tracking-[0.4px]">
        <div>16:30</div>
        <div>2023/5/24</div>
      </div>
      <div className="w-[46px] flex justify-center">
        <MessageSquare size={18} strokeWidth={1.2} />
      </div>
      <div className="w-[10px] h-full">
        <div className="ml-[5px] h-full border-l border-[#6a7380]" />
      </div>
    </div>
  </div>
);

export default function App() {
  return (
    <div className="relative w-[1920px] h-[1080px] overflow-hidden font-['Noto_Sans','Noto_Sans_CJK_SC',sans-serif] bg-[linear-gradient(180deg,rgba(18,120,220,0.45)_0%,rgba(18,120,220,0)_45%),linear-gradient(100deg,#00aef0_0%,#03a8ee_18%,#0b8de3_38%,#0a70d8_55%,#0553cb_75%,#033fb0_100%)]">
      {desk.map((d) => (
        <DesktopIcon key={d.x + '-' + d.row} item={d} />
      ))}
      <KeyWizardWindow />
      <BackNotepad />
      <ProxyPanel />
      <div className="absolute left-[180px] top-[749px] w-[46px] h-[46px] rounded-full bg-[radial-gradient(circle_at_50%_30%,#6cb4fb,#2f8df5)] border-2 border-[#d7ecff] flex items-center justify-center text-[14px] text-[#cfe6ff]">
        03:18
      </div>
      <Explorer />
      <FrontNotepad />
      <Taskbar />
    </div>
  );
}
